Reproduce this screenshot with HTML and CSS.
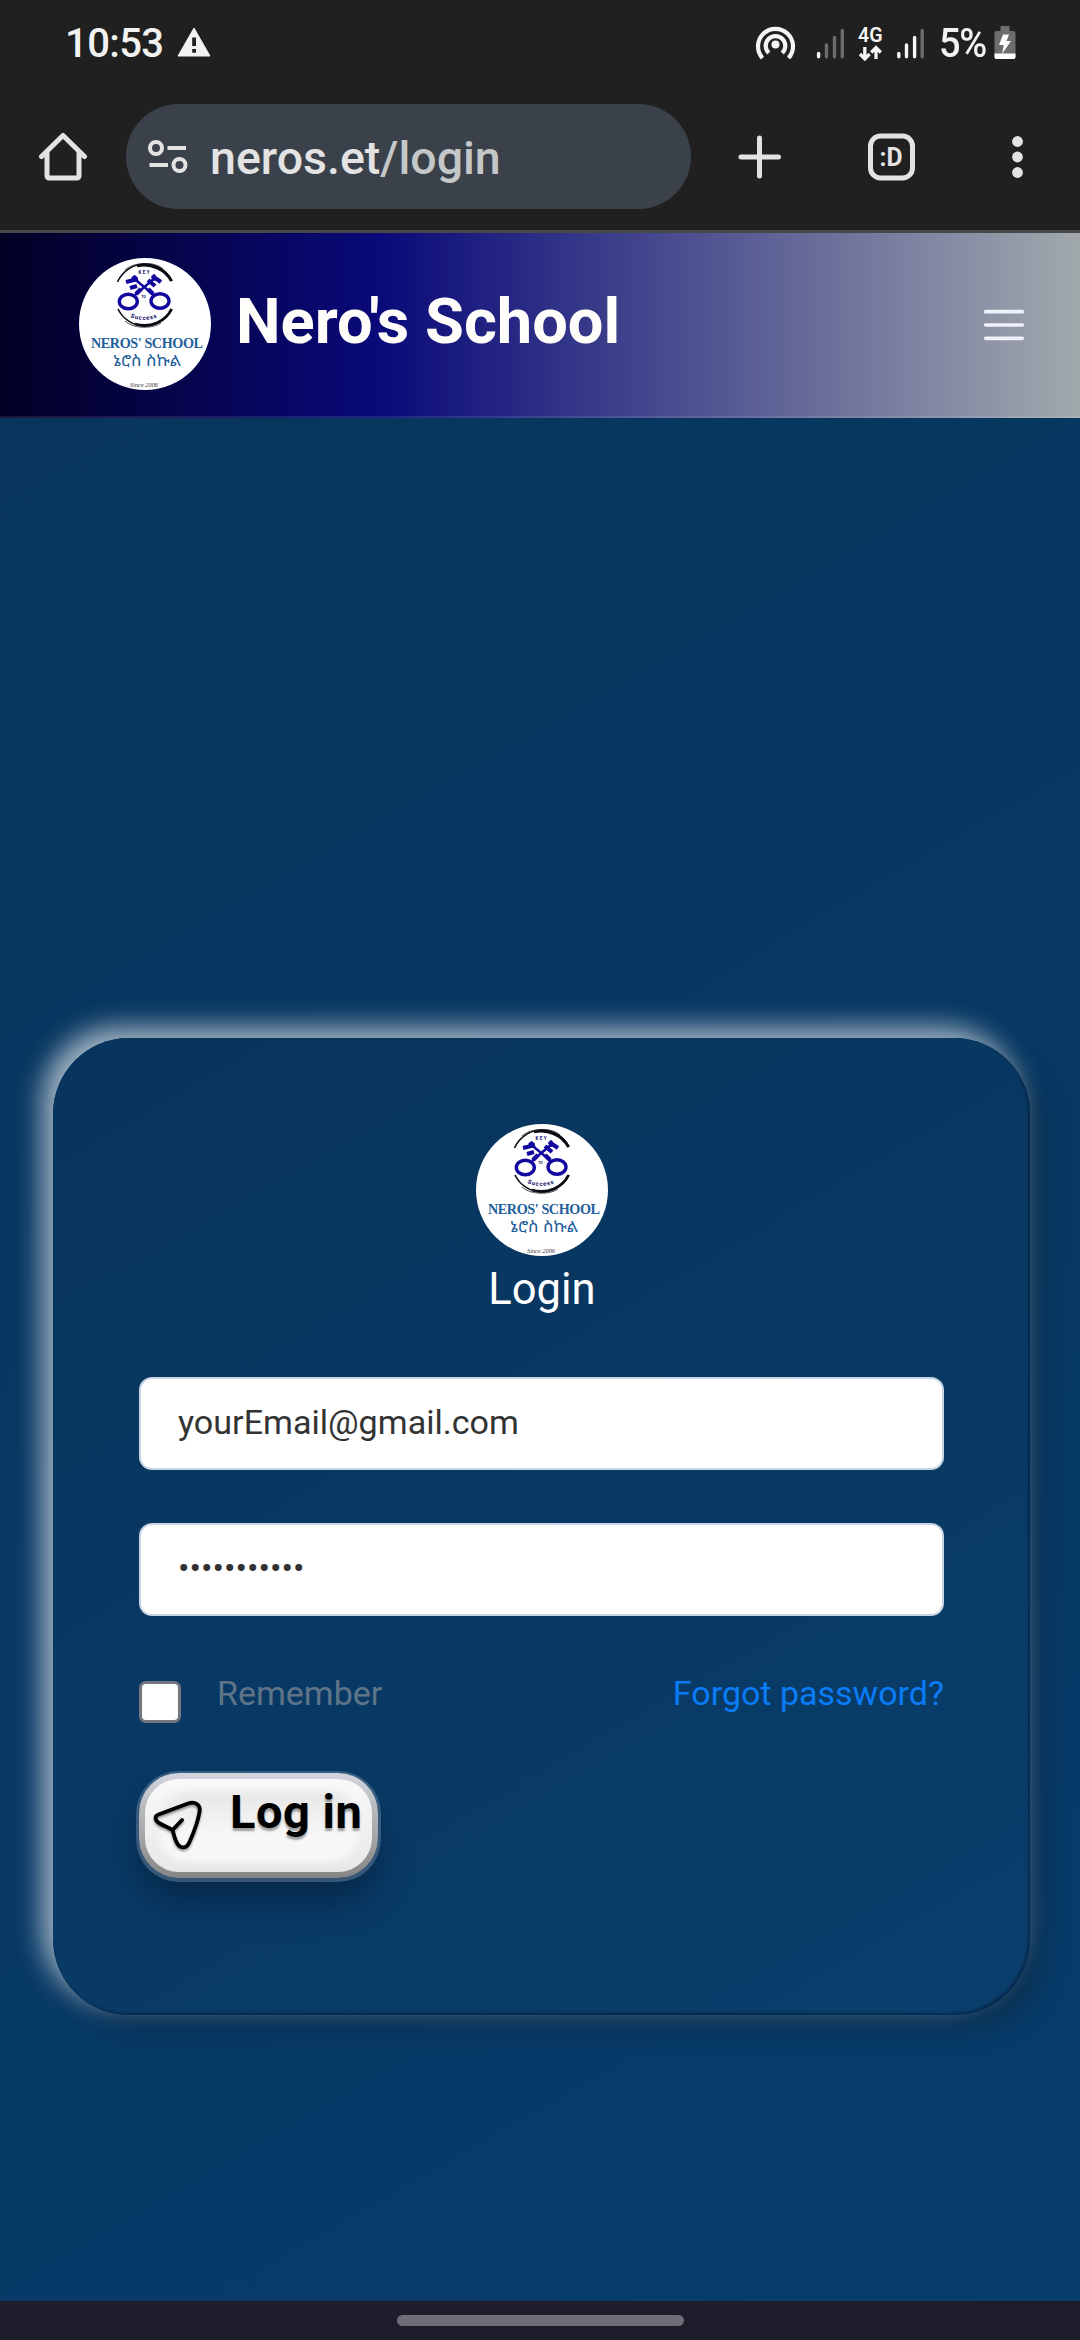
FILE: index.html
```html
<!DOCTYPE html>
<html lang="en">
<head>
<meta charset="utf-8">
<title>Nero's School</title>
<link rel="stylesheet" href="styles.css">
</head>
<body>
<div class="status">
  <span class="clock">10:53</span>
  <svg class="warn" width="34" height="30" viewBox="0 0 34 30"><path d="M17 1L33 29H1Z" fill="#f2f2f2" stroke="#f2f2f2" stroke-linejoin="round"/><path d="M15.200 10.500h3.800v8.500h-3.800zM15.200 22h3.800v3.800h-3.800z" fill="#202020"/></svg>
  <svg class="signals" width="172" height="44" viewBox="752 22 172 44">
    <g fill="none" stroke="#f5f5f5" stroke-width="4.200">
      <path d="M762.500 58A17.500 17.500 0 1 1 788.500 58"/>
      <path d="M768.800 53A9.800 9.800 0 1 1 782.200 53"/>
    </g>
    <circle cx="775.500" cy="44.500" r="4" fill="#f5f5f5"/>
    <g stroke-width="3.400" stroke-linecap="round">
      <path d="M818.600 53.500v3.300M898.800 53.500v3.300M906.500 45v11.800M914.600 37.500v19.300" stroke="#f5f5f5"/>
      <path d="M826.500 45v11.800M834.500 37.500v19.300M842.300 30.500v26.300M922.200 30.500v26.300" stroke="#6b6b6b"/>
    </g>
    <text x="858" y="41.500" font-family="Roboto, sans-serif" font-weight="600" font-size="19.500" fill="#f5f5f5" textLength="24.500" lengthAdjust="spacingAndGlyphs">4G</text>
    <path d="M864.800 47v11M860 54l4.800 4.800 4.800-4.800M876 59V48M871.200 52.500l4.800-4.800 4.800 4.800" fill="none" stroke="#f5f5f5" stroke-width="3.300"/>
  </svg>
  <span class="percent">5%</span>
  <svg class="battery" width="22" height="34" viewBox="0 0 22 34"><path d="M6.500 0h9v5h4a2 2 0 0 1 2 2v24a2 2 0 0 1-2 2h-17a2 2 0 0 1-2-2V7a2 2 0 0 1 2-2h4z" fill="#6d6d6d"/><path d="M.5 27.500h21V31a2 2 0 0 1-2 2h-17a2 2 0 0 1-2-2z" fill="#fff"/><path d="M9 8.500h6l-2.500 6.500H17L8 28l1.800-9H5z" fill="#fff"/></svg>
</div>

<div class="toolbar">
  <svg class="home" width="50" height="50" viewBox="0 0 50 50" fill="none" stroke="#e3e3e3" stroke-width="5" stroke-linecap="round" stroke-linejoin="round"><path d="M3.500 24.500L25 3.500l21.500 21M9 20v24a2 2 0 0 0 2 2h28a2 2 0 0 0 2-2V20"/></svg>
  <div class="omnibox">
    <svg width="40" height="34" viewBox="0 0 40 34" fill="none" stroke="#e3e3e3" stroke-width="4"><circle cx="8" cy="8" r="6"/><path d="M19.500 8H38M1.500 25H20"/><circle cx="31.500" cy="25" r="6"/></svg>
    <span class="url">neros.et<span class="path">/login</span></span>
  </div>
  <svg class="actions" width="300" height="50" viewBox="730 131.500 300 50">
    <path d="M759.500 137.500v38M741 156.500h37.500" stroke="#e3e3e3" stroke-width="5" stroke-linecap="round"/>
    <rect x="870.500" y="135.500" width="42" height="42" rx="10" fill="none" stroke="#e3e3e3" stroke-width="5"/>
    <text x="891" y="165" text-anchor="middle" textLength="23" lengthAdjust="spacingAndGlyphs" font-family="Roboto, sans-serif" font-weight="700" font-size="26" fill="#e3e3e3">:D</text>
    <g fill="#e3e3e3"><circle cx="1017.500" cy="141" r="5.400"/><circle cx="1017.500" cy="156.500" r="5.400"/><circle cx="1017.500" cy="172" r="5.400"/></g>
  </svg>
</div>

<header class="navbar">
  <svg class="logo" viewBox="0 0 132 132">
    <g id="logo">
      <circle cx="66" cy="66" r="66" fill="#fff"/>
      <g fill="none" stroke="#0b0b12">
        <path d="M38.500 24A30 30 0 0 1 93 23" stroke-width="1.600"/>
        <path d="M58 8C72 5 86 11 92.500 23" stroke-width="2.800"/>
        <path d="M39 51A30 30 0 0 0 93 51" stroke-width="1.600"/>
        <path d="M56 66C72 70.500 87 63 92.500 51" stroke-width="2.800"/>
        <path d="M46 12C54 4 76 3 84 11" stroke-width=".7"/>
        <path d="M46 63C54 71 74 71 82 65" stroke-width=".7"/>
      </g>
      <g fill="none" stroke="#1208a0">
        <ellipse cx="49.300" cy="43.500" rx="9" ry="7.300" stroke-width="3.400"/>
        <ellipse cx="81" cy="43" rx="9" ry="7.300" stroke-width="3.400"/>
        <path d="M56 37L77 19M75 37L53 19" stroke-width="2.500"/>
        <path d="M57 36L62 31M74 36L69 31" stroke-width="4.400"/>
        <path d="M69 22L76 28M73 18L82 24M58 28L51 30M59 21L47 24M74 17L77 22M57 18L53 23" stroke-width="4.200"/>
      </g>
      <g font-family="Roboto, sans-serif" font-weight="700" fill="#15106f" text-anchor="middle">
        <text x="65" y="15.500" font-size="4.500" textLength="11">KEY</text>
        <text x="64.500" y="39.500" font-size="3.500">TO</text>
        <path id="arc" d="M46 56.500Q65 67.500 84 56.500" fill="none"/>
        <text font-size="6" letter-spacing=".8"><textPath href="#arc" startOffset="50%">Success</textPath></text>
      </g>
      <text x="12" y="90.300" textLength="112" font-family="'Liberation Serif', serif" font-weight="700" font-size="14.200" fill="#235f9c">NEROS' SCHOOL</text>
      <text x="34" y="107.500" textLength="68" lengthAdjust="spacingAndGlyphs" font-family="'Noto Sans Ethiopic', 'Noto Sans', sans-serif" font-size="15.500" fill="#1f5c9b">ኔሮስ ስኩል</text>
      <text x="51" y="129" textLength="28" lengthAdjust="spacingAndGlyphs" font-family="'Liberation Serif', serif" font-style="italic" font-size="6.500" fill="#333">Since 2006</text>
    </g>
  </svg>
  <h1 class="brand">Nero's School</h1>
  <svg class="menu" width="50" height="50" viewBox="0 0 30 30" stroke="#eef0fa" stroke-width="2.200" stroke-linecap="round"><path d="M4 7h22M4 15h22M4 23h22"/></svg>
</header>

<main class="page">
  <form class="card">
    <svg class="logo" viewBox="0 0 132 132"><use href="#logo"/></svg>
    <h2 class="title">Login</h2>
    <div class="field">yourEmail@gmail.com</div>
    <div class="field">•••••••••••</div>
    <div class="options">
      <span class="check"></span>
      <span class="remember">Remember</span>
      <a class="forgot">Forgot password?</a>
    </div>
    <button class="submit" type="button">
      <svg width="54" height="56" viewBox="0 0 54 56" fill="none" stroke="#000" stroke-width="3.800" stroke-linecap="round" stroke-linejoin="round"><path d="M6.500 17.500L36 6.500C43 4 49 7.500 47.500 15C46 24 42 35 37.500 45C34 53 27 51.500 24 44C22 39 21.500 36 20.500 33C17 30.500 12 29 7 26C2.500 23 2.500 19 6.500 17.500ZM20.500 33L30 23"/></svg>
      <span>Log in</span>
    </button>
  </form>
</main>

<div class="gesture"><span class="pill"></span></div>
</body>
</html>
```

FILE: styles.css
```css
* { box-sizing: border-box; }
body {
  margin: 0;
  width: 1080px;
  height: 2340px;
  display: flex;
  flex-direction: column;
  overflow: hidden;
  background: #202020;
  font-family: Roboto, sans-serif;
}
svg { display: block; flex: none; }

.status {
  height: 88px;
  padding: 0 64px 0 65px;
  display: flex;
  align-items: center;
  color: #f2f2f2;
  font-size: 40px;
  font-weight: 500;
  line-height: 90px;
}
.clock { width: 112px; letter-spacing: -0.6px; }
.warn { margin-bottom: 4px; }
.signals { margin-left: auto; }
.percent { width: 54px; margin-left: 15px; letter-spacing: -1.5px; white-space: nowrap; transform: scaleX(.95); transform-origin: left; font-weight: 500; }
.battery { margin: 0 0 3px 1px; }

.toolbar {
  height: 145px;
  padding: 16px 50px 21px 38px;
  display: flex;
  align-items: center;
  border-bottom: 3px solid #48484b;
}
.omnibox {
  width: 565px;
  height: 105px;
  margin-left: 38px;
  padding-left: 22px;
  display: flex;
  align-items: center;
  border-radius: 53px;
  background: #3b414a;
}
.url { margin: 3px 0 0 22px; color: #e3e3e3; font-size: 46.5px; font-weight: 500; white-space: nowrap; }
.path { color: #c4c7c8; }
.actions { margin-left: auto; }

.navbar {
  height: 185px;
  padding: 0 51.5px 0 79px;
  display: flex;
  align-items: center;
  background: linear-gradient(90deg, #020024 0%, #090979 35%, #a1a9ad 100%);
  border-bottom: 2px solid rgba(255,255,255,.1);
}
.logo { width: 132px; height: 132px; }
.navbar .logo { margin-bottom: 1px; }
.brand { margin: 0 0 5px 25px; color: #fffdfa; font-size: 63.2px; font-weight: 700; line-height: 1; white-space: nowrap; }
.menu { margin-left: auto; }

.page {
  height: 1883px;
  padding: 620px 50px 0 53px;
  background: linear-gradient(150deg, #07355c, #083c6c);
}
.card {
  height: 977px;
  padding: 86px 86px 0;
  display: flex;
  flex-direction: column;
  border-radius: 76px;
  background: linear-gradient(150deg, #07345c, #0a3e6c);
  box-shadow: -11px -11px 26px rgba(255,255,255,.62), 13px 13px 26px rgba(12,35,45,.4), inset -2px -2px 2px rgba(0,15,40,.4);
}
.card .logo { align-self: center; }
.title { margin: 7px 0 60px; padding-left: 1px; align-self: center; color: #fff; font-size: 43.5px; font-weight: 400; line-height: 54px; }
.field {
  height: 93px;
  margin-bottom: 53px;
  padding: 0 37px;
  border: 2px solid #c6d4e4;
  border-radius: 13px;
  background: #fff;
  color: #333;
  font-size: 34.1px;
  line-height: 87px;
}
.options { height: 60px; display: flex; align-items: flex-start; font-size: 34px; line-height: 48px; }
.check { width: 42px; height: 42px; margin-top: 12px; border: 3px solid #767680; border-radius: 7px; background: #fff; }
.remember { margin-left: 36px; color: #5f7488; }
.forgot { margin-left: auto; color: #0b7cf7; }
.submit {
  width: 239px;
  height: 105px;
  margin: 44px 0 0;
  padding: 0;
  display: flex;
  align-items: flex-start;
  position: relative;
  isolation: isolate;
  border: 6px solid transparent;
  border-radius: 40px;
  color: #000;
  font: 700 47px/1 Roboto, sans-serif;
  letter-spacing: .5px;
  background:
    linear-gradient(#f9f9f9, #e8e8e8) padding-box,
    linear-gradient(#d2d6dc, #858585) border-box;
  box-shadow: 0 1px 0 3px rgba(150,170,195,.35), 0 22px 34px rgba(0,20,40,.45);
}
.submit::before {
  content: "";
  position: absolute;
  z-index: -1;
  inset: 13px 14px 10px;
  border-radius: 28px;
  background: linear-gradient(#e7e7e7, #f7f7f7 60%);
  filter: blur(3px);
}
.submit svg { margin: 18px 0 0 7px; filter: drop-shadow(0 2px 1px rgba(0,0,0,.4)); }
.submit span { margin: 9px 0 0 24px; white-space: nowrap; text-shadow: 0 3px 2px rgba(0,0,0,.35); }

.gesture { height: 39px; display: flex; justify-content: center; padding-top: 14px; background: #1e1d2c; }
.pill { width: 287px; height: 11px; border-radius: 6px; background: #6f6e76; }
```
